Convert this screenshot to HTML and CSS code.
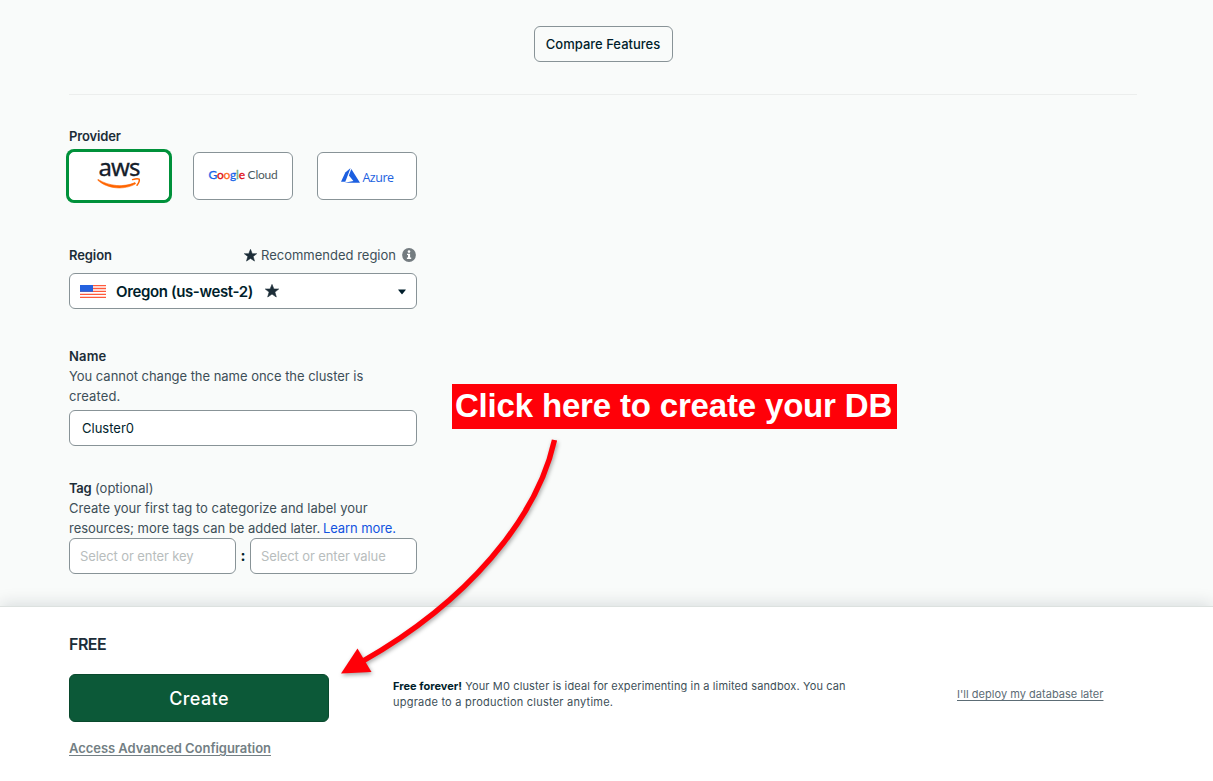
FILE: index.html
```html
<!DOCTYPE html>
<html lang="en">
<head>
<meta charset="utf-8">
<title>Create cluster</title>
<link rel="stylesheet" href="styles.css">
</head>
<body>
<div class="page">
  <main class="content">
    <div class="compare"><button class="compare-btn"><span class="t-compare">Compare Features</span></button></div>
    <form class="form">
      <section class="provider">
        <h2 class="label t-provider">Provider</h2>
        <div class="providers">
          <div class="card selected">
            <span class="aws">aws</span>
            <svg class="smile" width="44" height="12" viewBox="0 0 44 12"><path d="M1 2.4C12 9.5 27 10.5 38 5.6L38.6 6.8C28 13 11 12.5 .8 3.2Z" fill="#ff6400" stroke="#ff6400" stroke-width=".6" stroke-linejoin="round"/><path d="M35.6 2.6C38 1.8 41.4 1.7 42.2 2.2C42.6 3.6 41.6 6.2 40 8.2" fill="none" stroke="#ff6400" stroke-width="1.5" stroke-linecap="round"/></svg>
          </div>
          <div class="card"><span class="google"><i class="g-blue">G</i><i class="g-red">o</i><i class="g-orange">o</i><i class="g-blue">g</i><i class="g-green">l</i><i class="g-red">e</i> Cloud</span></div>
          <div class="card azure">
            <svg width="19" height="16" viewBox="0 0 19 16" fill="#1c5fe0"><path d="M9.6 0L4.3 4.6L0 13.8H4.3Z"/><path d="M10.3 1L7.9 7.4L12.4 13L3.7 14.8H19Z"/></svg>
            <span class="azure-name">Azure</span>
          </div>
        </div>
      </section>
      <section class="region">
        <div class="region-head">
          <h2 class="label t-region">Region</h2>
          <span class="recommended">
            <svg class="star" width="13" height="13" viewBox="0 0 14 14"><path d="M7 .4L8.9 5H13.7L9.9 8.1L11.3 13L7 10.1L2.7 13L4.1 8.1L.3 5H5.1Z" fill="#1c2d38" stroke="#1c2d38" stroke-width=".6" stroke-linejoin="round"/></svg>
            <span class="t-rec">Recommended region</span>
            <svg class="info" width="14" height="14" viewBox="0 0 14 14"><circle cx="7" cy="7" r="6.9" fill="#747c80"/><circle cx="7" cy="3.6" r="1.3" fill="#fff"/><path d="M5 5.7H8.1V9.6H9.2V11H4.9V9.6H6V7H5Z" fill="#fff"/></svg>
          </span>
        </div>
        <div class="field select">
          <svg class="flag" width="26" height="13" viewBox="0 0 26 13"><path d="M0 0H26V13H0Z" fill="#fff"/><path d="M0 .6H26M0 3.5H26M0 6.4H26M0 9.3H26M0 12.3H26" stroke="#ff5a3c" stroke-width="1.3"/><path d="M0 0H13V6.8H0Z" fill="#2462df"/></svg>
          <span class="t-oregon">Oregon (us-west-2)</span>
          <svg class="star" width="14" height="14" viewBox="0 0 14 14"><path d="M7 .4L8.9 5H13.7L9.9 8.1L11.3 13L7 10.1L2.7 13L4.1 8.1L.3 5H5.1Z" fill="#1c2d38" stroke="#1c2d38" stroke-width=".6" stroke-linejoin="round"/></svg>
          <svg class="caret" width="8" height="6" viewBox="0 0 8 6"><path d="M.4 .4H7.6Q8 .6 7.7 1L4.4 5.1Q4 5.6 3.6 5.1L.3 1Q0 .6 .4 .4Z" fill="#001e2b"/></svg>
        </div>
      </section>
      <section class="name">
        <h2 class="label t-name">Name</h2>
        <p class="desc"><span class="t-name1">You cannot change the name once the cluster is</span><br><span class="t-name2">created.</span></p>
        <div class="field text"><span class="t-cluster">Cluster0</span></div>
      </section>
      <section class="tag">
        <div class="tag-head"><strong class="t-tag">Tag</strong> <span class="t-optional">(optional)</span></div>
        <p class="desc"><span class="t-tag1">Create your first tag to categorize and label your</span><br><span class="t-tag2">resources; more tags can be added later.</span> <a class="learn">Learn more.</a></p>
        <div class="pair">
          <div class="field half"><span class="t-key">Select or enter key</span></div>
          <b class="colon">:</b>
          <div class="field half"><span class="t-value">Select or enter value</span></div>
        </div>
      </section>
    </form>
  </main>
  <footer class="footer">
    <div class="actions">
      <div class="free">FREE</div>
      <button class="create"><span class="t-create">Create</span></button>
      <a class="advanced">Access Advanced Configuration</a>
    </div>
    <p class="note"><span class="t-note1"><b>Free forever!</b> Your M0 cluster is ideal for experimenting in a limited sandbox. You can</span><br><span class="t-note2">upgrade to a production cluster anytime.</span></p>
    <a class="later">I'll deploy my database later</a>
  </footer>
  <div class="callout"><span>Click here to create your DB</span></div>
  <svg class="arrow" width="250" height="260" viewBox="330 430 250 260"><path d="M554.5 440C537 519 467 602 363 661" fill="none" stroke="#ff0008" stroke-width="5.4"/><path d="M341 673.5L357.5 648.5L371.5 672Z" fill="#ff0008"/></svg>
</div>
</body>
</html>
```

FILE: styles.css
```css
* { box-sizing: border-box; }
body { margin: 0; font-family: Inter, "Liberation Sans", sans-serif; font-size: 13px; line-height: 20px; color: #3d4f58; }
.page { position: relative; width: 1213px; height: 781px; overflow: hidden; display: flex; flex-direction: column; background: #f9fbfa; }
.page span, .page a { white-space: nowrap; }
h2, p { margin: 0; }
.content { height: 606px; padding: 0 76px 0 69px; flex: none; }
.compare { height: 95px; padding: 26px 0 0; border-bottom: 1px solid #eceeed; display: flex; justify-content: center; align-items: flex-start; }
.compare-btn { width: 139px; height: 36px; padding: 0; border: 1px solid #889397; border-radius: 6px; background: #f9fbfa; font: 500 13px/20px Inter, sans-serif; color: #001e2b; }
.form { width: 348px; padding-top: 31px; }
.label { font-size: 13px; line-height: 20px; font-weight: 600; color: #1c2d38; }
.t-provider { letter-spacing: -.15px; }
.t-region { letter-spacing: -.1px; }
.t-name { letter-spacing: .15px; }
.provider { height: 119px; }
.providers { display: flex; gap: 24px; padding-top: 6px; }
.card { width: 100px; height: 48px; border: 1px solid #889397; border-radius: 6px; background: #fff; display: flex; align-items: center; justify-content: center; }
.selected { border-color: #fff; box-shadow: 0 0 0 3px #00913a; flex-direction: column; justify-content: flex-start; border-radius: 5px; }
.aws { font: 400 24px/26px "Noto Sans", sans-serif; letter-spacing: -.9px; color: #15202b; -webkit-text-stroke: .3px #15202b; margin-top: 1px; }
.smile { margin-top: -3px; }
.google { font: 400 12px/20px Lato, sans-serif; letter-spacing: -.25px; color: #4b5960; margin-top: -2px; }
.google i { font-style: normal; -webkit-text-stroke: .3px currentColor; }
.google .g-blue { color: #1764e8; }
.google .g-red { color: #e00b12; }
.google .g-orange { color: #ff6a19; }
.google .g-green { color: #6aa884; }
.azure { gap: 2px; padding-left: 1px; }
.azure-name { font: 400 12.5px/20px "Open Sans", sans-serif; letter-spacing: -.5px; color: #1c61e0; margin-top: 3px; }
.region { height: 101px; }
.region-head { display: flex; justify-content: space-between; }
.recommended { display: flex; align-items: center; gap: 4px; }
.info { margin-left: 2px; margin-right: 1px; }
.field { height: 36px; border: 1px solid #889397; border-radius: 6px; background: #fff; display: flex; align-items: center; color: #001e2b; }
.select { margin-top: 8px; padding: 0 10px; font-size: 15px; font-weight: 600; }
.t-oregon { margin: 1px 12px 0 10px; letter-spacing: -.37px; }
.caret { margin-left: auto; margin-top: 1px; }
.name { height: 132px; }
.t-name1 { letter-spacing: -.03px; }
.t-name2 { letter-spacing: .1px; }
.text { padding-left: 12px; margin-top: 4px; }
.tag-head strong { color: #1c2d38; font-weight: 600; letter-spacing: -.3px; }
.t-tag1 { letter-spacing: .02px; }
.t-tag2 { letter-spacing: -.01px; }
.learn { color: #1254e0; letter-spacing: -.1px; margin-left: -1px; }
.pair { display: flex; justify-content: space-between; }
.half { width: 167px; padding-left: 10px; color: #b8bdbd; }
.t-key, .t-value { letter-spacing: -.1px; }
.colon { line-height: 36px; color: #001e2b; font-size: 15px; }
.footer { height: 175px; flex: none; background: #fff; border-top: 1px solid #dce1df; box-shadow: 0 -2px 16px rgba(0, 30, 43, .14); padding-left: 69px; display: flex; position: relative; }
.actions { width: 260px; padding-top: 27px; display: flex; flex-direction: column; align-items: flex-start; }
.free { font-size: 16px; line-height: 20px; font-weight: 600; color: #1c2d38; letter-spacing: -.5px; }
.create { width: 260px; height: 48px; margin-top: 20px; padding: 2px 0 0; border: 1px solid #09492d; border-radius: 6px; background: #0c5938; color: #fff; font: 500 18px/24px Inter, sans-serif; letter-spacing: .4px; }
.advanced { margin-top: 16px; font-weight: 600; color: #737f84; letter-spacing: -.04px; text-decoration: underline; text-underline-offset: 2px; }
.note { width: 500px; margin-left: 64px; padding-top: 71px; font-size: 11px; line-height: 16px; }
.note b { color: #001e2b; font-weight: 700; letter-spacing: .02px; }
.t-note1 { letter-spacing: .13px; }
.t-note2 { letter-spacing: .23px; }
.later { margin-left: 64px; padding-top: 79px; font-size: 11px; line-height: 16px; color: #5c6c75; letter-spacing: .03px; text-decoration: underline; text-underline-offset: 2px; }
.callout { position: absolute; left: 452px; top: 384px; width: 445px; height: 45px; padding-right: 2px; background: #ff0008; color: #fff; display: flex; justify-content: center; font: 700 33px/44px "Liberation Sans", sans-serif; letter-spacing: -.17px; }
.arrow { position: absolute; left: 330px; top: 430px; filter: drop-shadow(1px 2px 2px rgba(0, 0, 0, .35)); }
```
